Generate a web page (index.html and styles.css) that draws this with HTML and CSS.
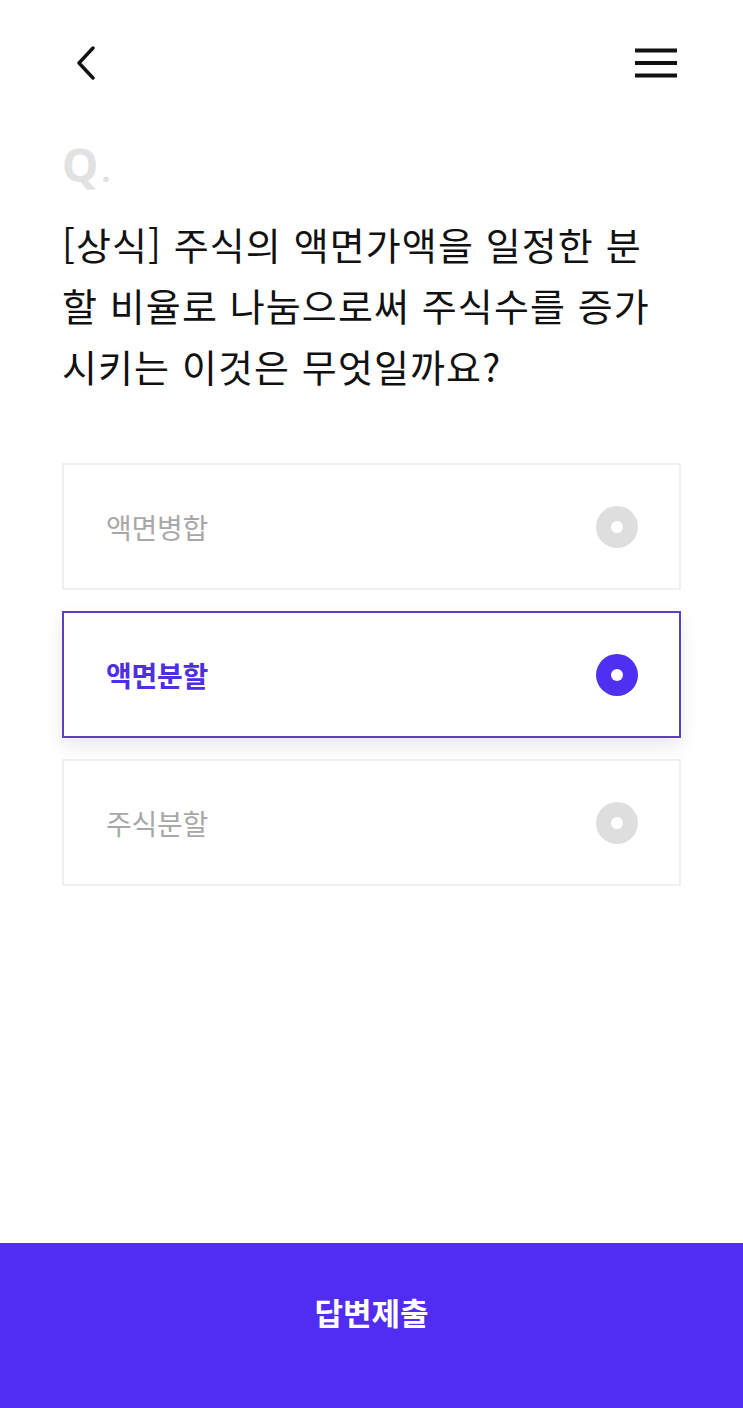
FILE: index.html
```html
<!DOCTYPE html>
<html lang="ko">
<head>
<meta charset="utf-8">
<title>퀴즈</title>
<link rel="stylesheet" href="styles.css">
</head>
<body>
<div class="screen">
  <header class="topbar">
    <button class="icon-btn back" aria-label="뒤로">
      <svg width="24" height="34" viewBox="0 0 24 34"><path d="M19 2 L5 17 L19 32" fill="none" stroke="#111" stroke-width="3.4" stroke-linecap="round" stroke-linejoin="round"/></svg>
    </button>
    <button class="icon-btn menu" aria-label="메뉴">
      <svg width="42" height="30" viewBox="0 0 42 30"><rect x="0" y="0.5" width="42" height="4" fill="#111"/><rect x="0" y="13" width="42" height="4" fill="#111"/><rect x="0" y="25.5" width="42" height="4" fill="#111"/></svg>
    </button>
  </header>

  <main class="content">
    <div class="q-mark">Q<span class="dot">.</span></div>
    <h1 class="question">[상식] 주식의 액면가액을 일정한 분<br>할 비율로 나눔으로써 주식수를 증가<br>시키는 이것은 무엇일까요?</h1>

    <ul class="options">
      <li class="option"><span class="label">액면병합</span><span class="radio"></span></li>
      <li class="option selected"><span class="label">액면분할</span><span class="radio"></span></li>
      <li class="option"><span class="label">주식분할</span><span class="radio"></span></li>
    </ul>
  </main>

  <footer class="submit">답변제출</footer>
</div>
</body>
</html>
```

FILE: styles.css
```css
* { box-sizing: border-box; }
html, body { margin: 0; padding: 0; background: #fff; }
body {
  font-family: "Noto Sans CJK KR", "Noto Sans", sans-serif;
  color: #111;
}
.screen {
  width: 743px;
  height: 1408px;
  display: flex;
  flex-direction: column;
}
.topbar {
  height: 134px;
  padding: 46px 66px 0 74px;
  display: flex;
  justify-content: space-between;
  align-items: flex-start;
}
.icon-btn {
  border: 0;
  background: none;
  padding: 0;
  margin: 0;
  display: block;
}
.icon-btn svg { display: block; }
.menu { margin-top: 2px; }
.content {
  flex: 1;
  padding: 0 62px;
}
.q-mark {
  font-family: "Noto Sans", sans-serif;
  font-weight: 700;
  font-size: 46px;
  line-height: 60px;
  color: #e2e2e2;
  height: 60px;
}
.q-mark .dot { font-size: 32px; margin-left: 3px; }
.question {
  margin: 19px 0 0;
  font-weight: 400;
  font-size: 38px;
  line-height: 61px;
  letter-spacing: 1.1px;
  color: #111;
  white-space: nowrap;
}
.options {
  list-style: none;
  margin: 67px 0 0;
  padding: 0;
  display: flex;
  flex-direction: column;
  gap: 21px;
}
.option {
  height: 127px;
  border: 2px solid #efefef;
  background: #fff;
  display: flex;
  align-items: center;
  justify-content: space-between;
  padding: 0 41px 0 42px;
}
.label {
  font-size: 28px;
  letter-spacing: -0.3px;
  color: #a8a8a8;
}
.radio {
  width: 42px;
  height: 42px;
  border-radius: 50%;
  background: #dedede;
  position: relative;
}
.radio::after {
  content: "";
  position: absolute;
  left: 50%;
  top: 50%;
  width: 12px;
  height: 12px;
  margin: -6px 0 0 -6px;
  border-radius: 50%;
  background: #fff;
}
.option.selected {
  border-color: #5b3fc4;
  box-shadow: 0 8px 18px rgba(0, 0, 0, 0.09);
}
.option.selected .label {
  color: #4d2ee0;
  font-weight: 700;
}
.option.selected .radio { background: #4f2ff0; }
.submit {
  height: 165px;
  background: #512cf2;
  color: #fff;
  font-size: 31px;
  font-weight: 700;
  display: flex;
  align-items: center;
  justify-content: center;
  padding-bottom: 28px;
}
```
